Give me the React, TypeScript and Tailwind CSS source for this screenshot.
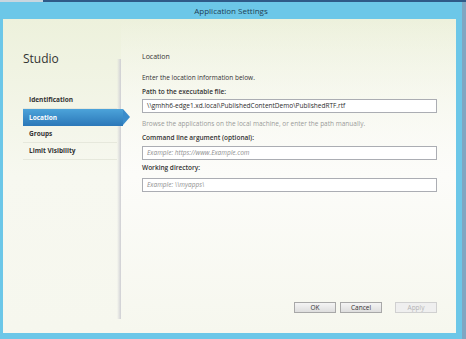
import React from "react"

const navItems = ["Identification", "Location", "Groups", "Limit Visibility"]

function Field({ value, placeholder }: { value?: string; placeholder?: string }) {
  return (
    <div className="h-[14px] w-[295px] border border-[#abadb3] bg-white px-[4px] flex items-center overflow-hidden whitespace-nowrap">
      {value ? (
        <span className="text-[#2b2b2b]">{value}</span>
      ) : (
        <span className="italic text-[#8f8f8f]">{placeholder}</span>
      )}
    </div>
  )
}

function Button({ label, disabled }: { label: string; disabled?: boolean }) {
  return (
    <button
      className={
        disabled
          ? "h-[11px] w-[42px] border border-[#d0d0d0] bg-[#efefef] text-[#b4b4b4] leading-[9px] text-[6.5px]"
          : "h-[11px] w-[42px] border border-[#a8a8a8] bg-gradient-to-b from-[#f4f4f4] to-[#dedede] text-[#333] leading-[9px] text-[6.5px]"
      }
    >
      {label}
    </button>
  )
}

export default function App() {
  return (
    <div
      className="relative w-[466px] h-[339px] overflow-hidden bg-[#7fa6c2] text-[6.5px] text-[#333]"
      style={{ fontFamily: '"Open Sans", "Noto Sans", sans-serif' }}
    >
      {/* top strip */}
      <div className="flex h-[2px]">
        <div className="w-[43px] bg-[#c9d6df]" />
        <div className="flex-1 bg-[#2f5a88]" />
      </div>

      {/* window frame */}
      <div className="w-[462px] h-[337px] bg-[#6cc7e8] flex flex-col">
        <div className="h-[17px] flex items-center justify-center text-[8px] text-[#1f3f55]">
          Application Settings
        </div>

        <div className="ml-[3px] w-[453px] h-[314px] bg-gradient-to-b from-[#edf1dc] via-[#f7f8f0] to-[#f6f7ee] flex">
          {/* left nav */}
          <div className="w-[114px] pt-[33px] pl-[20px] flex flex-col">
            <div className="text-[12px] leading-[14px] text-[#333]">Studio</div>
            <div className="mt-[26px] flex flex-col">
              {navItems.map((item) =>
                item === "Location" ? (
                  <div key={item} className="relative z-10 h-[17px] -mr-[6px] flex items-center pl-[6px] font-bold text-white bg-gradient-to-b from-[#4ca3da] to-[#2b78b8]">
                    {item}
                    <div className="absolute -right-[7px] top-0 w-0 h-0 border-y-[8.5px] border-y-transparent border-l-[7px] border-l-[#3a8ccb]" />
                  </div>
                ) : (
                  <div key={item} className="h-[17px] flex items-center pl-[6px] font-bold text-[#333] border-b border-[#e6e8dc]">
                    {item}
                  </div>
                )
              )}
            </div>
          </div>

          {/* divider shadow */}
          <div className="w-[4px] mt-[40px] mb-[14px] bg-gradient-to-r from-transparent to-[#cfcfd4]" />

          {/* content */}
          <div className="flex-1 flex flex-col pl-[21px] pr-[16px] pt-[33px] pb-[20px] bg-gradient-to-b from-transparent via-[#fcfcf9] to-[#f6f7ee]">
            <div className="leading-[10px] text-[7px] text-[#333]">Location</div>
            <div className="mt-[11px] leading-[10px]">Enter the location information below.</div>
            <div className="mt-[4px] leading-[10px] font-semibold">Path to the executable file:</div>
            <div className="mt-[2px]">
              <Field value="\\gmhh6-edge1.xd.local\PublishedContentDemo\PublishedRTF.rtf" />
            </div>
            <div className="mt-[6px] leading-[10px] text-[#9a9a9a]">
              Browse the applications on the local machine, or enter the path manually.
            </div>
            <div className="mt-[4px] leading-[10px] font-semibold">Command line argument (optional):</div>
            <div className="mt-[3px]">
              <Field placeholder="Example: https://www.Example.com" />
            </div>
            <div className="mt-[3px] leading-[10px] font-semibold">Working directory:</div>
            <div className="mt-[5px]">
              <Field placeholder="Example: \\myapps\" />
            </div>

            <div className="mt-auto flex justify-end pr-[3px]">
              <div className="flex gap-[4px]">
                <Button label="OK" />
                <Button label="Cancel" />
              </div>
              <div className="ml-[13px]">
                <Button label="Apply" disabled />
              </div>
            </div>
          </div>
        </div>
      </div>
    </div>
  )
}
